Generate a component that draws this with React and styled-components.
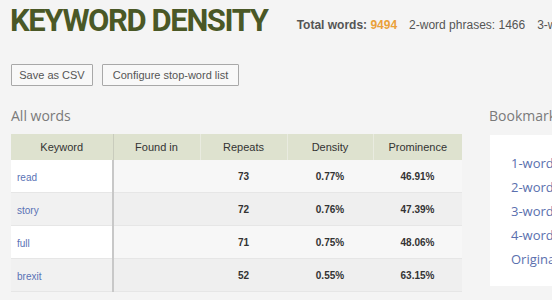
import React from "react";
import styled, { createGlobalStyle } from "styled-components";

const GlobalStyle = createGlobalStyle`
  html, body {
    margin: 0;
    padding: 0;
    background: #f4f4f4;
    font-family: "Liberation Sans", Arial, sans-serif;
    overflow: hidden;
  }
`;

const Page = styled.div`
  width: 552px;
  height: 300px;
  padding: 3px 0 0 11px;
  box-sizing: border-box;
  overflow: hidden;
`;

const Header = styled.div`
  display: flex;
  align-items: flex-start;
  white-space: nowrap;
`;

const Title = styled.h1`
  margin: 0 0 0 -1px;
  font-family: Roboto, "Liberation Sans", sans-serif;
  font-weight: 700;
  font-size: 31px;
  line-height: 36px;
  letter-spacing: -1.4px;
  color: #4a5826;
`;

const Stats = styled.div`
  display: flex;
  gap: 12px;
  margin: 15px 0 0 29px;
  font-size: 12px;
  line-height: 14px;
  color: #555;
`;

const StatLabel = styled.b`
  font-weight: 700;
  color: #555;
`;

const Number = styled.span`
  font-weight: ${(p) => (p.$hot ? 700 : 400)};
  color: ${(p) => (p.$hot ? "#eaa13a" : "#555")};
`;

const Toolbar = styled.div`
  display: flex;
  gap: 9px;
  margin-top: 25px;
`;

const Button = styled.button`
  width: ${(p) => p.$width}px;
  height: 22px;
  padding: 0;
  background: #f8f8f8;
  border: 1px solid #a8a8a8;
  border-radius: 1px;
  font-family: "Liberation Sans", Arial, sans-serif;
  font-size: 11px;
  color: #555;
`;

const Main = styled.div`
  display: flex;
  gap: 27px;
  margin-top: 21px;
`;

const Column = styled.div`
  display: flex;
  flex-direction: column;
  flex: none;
  width: ${(p) => p.$width}px;
`;

const SectionTitle = styled.div`
  font-family: "Open Sans", sans-serif;
  font-size: 14px;
  line-height: 18px;
  color: #7a7a7a;
  white-space: nowrap;
`;

const Table = styled.table`
  margin-top: 9px;
  border-collapse: collapse;
  width: 451px;
  table-layout: fixed;
`;

const Th = styled.th`
  height: 26px;
  padding: 0;
  background: #dee2cf;
  font-weight: 400;
  font-size: 11px;
  color: #333;
  border-left: 1px solid ${(p) => (p.$strong ? "#c9ccbd" : "#e9ebe0")};
  &:first-child {
    border-left: none;
  }
`;

const Tr = styled.tr`
  background: ${(p) => (p.$odd ? "#efefef" : "#f7f7f7")};
  border-bottom: 1px solid #e6e6e6;
`;

const Td = styled.td`
  height: 32px;
  padding: 0;
  text-align: center;
  color: #333;
  font-weight: 700;
  font-size: 10px;
`;

const KeywordCell = styled.td`
  padding: 0 0 0 6px;
  background: ${(p) => (p.$odd ? "#f1f1f1" : "#ffffff")};
  border-right: 2px solid #c8c8c8;
`;

const Link = styled.a`
  color: #5a72b5;
  text-decoration: none;
  font-size: 10px;
`;

const Bookmarks = styled.div`
  margin: 10px 0 0 1px;
  background: #ffffff;
  height: 151px;
  padding: 19px 0 0 21px;
  box-sizing: border-box;
  display: flex;
  flex-direction: column;
  gap: 6px;
  white-space: nowrap;
`;

const BookmarkLink = styled.a`
  font-family: "Open Sans", sans-serif;
  color: #5a6fae;
  font-size: 13px;
  line-height: 18px;
  text-decoration: none;
`;

const rows = [
  { word: "read", repeats: 73, density: "0.77%", prominence: "46.91%" },
  { word: "story", repeats: 72, density: "0.76%", prominence: "47.39%" },
  { word: "full", repeats: 71, density: "0.75%", prominence: "48.06%" },
  { word: "brexit", repeats: 52, density: "0.55%", prominence: "63.15%" },
];

export default function App() {
  return (
    <Page>
      <GlobalStyle />
      <Header>
        <Title>KEYWORD DENSITY</Title>
        <Stats>
          <span>
            <StatLabel>Total words: </StatLabel>
            <Number $hot>9494</Number>
          </span>
          <span>
            2-word phrases: <Number>1466</Number>
          </span>
          <span>
            3-word phrases: <Number>1458</Number>
          </span>
        </Stats>
      </Header>
      <Toolbar>
        <Button $width={82}>Save as CSV</Button>
        <Button $width={137}>Configure stop-word list</Button>
      </Toolbar>
      <Main>
        <Column $width={451}>
          <SectionTitle>All words</SectionTitle>
          <Table>
            <colgroup>
              <col style={{ width: 102 }} />
              <col style={{ width: 87 }} />
              <col style={{ width: 87 }} />
              <col style={{ width: 86 }} />
              <col style={{ width: 89 }} />
            </colgroup>
            <thead>
              <tr>
                <Th>Keyword</Th>
                <Th $strong>Found in</Th>
                <Th>Repeats</Th>
                <Th>Density</Th>
                <Th>Prominence</Th>
              </tr>
            </thead>
            <tbody>
              {rows.map((r, i) => (
                <Tr key={r.word} $odd={i % 2 === 1}>
                  <KeywordCell $odd={i % 2 === 1}>
                    <Link href="#">{r.word}</Link>
                  </KeywordCell>
                  <Td />
                  <Td>{r.repeats}</Td>
                  <Td>{r.density}</Td>
                  <Td>{r.prominence}</Td>
                </Tr>
              ))}
            </tbody>
          </Table>
        </Column>
        <Column $width={120}>
          <SectionTitle>Bookmarks</SectionTitle>
          <Bookmarks>
            <BookmarkLink href="#">1-word phrases</BookmarkLink>
            <BookmarkLink href="#">2-word phrases</BookmarkLink>
            <BookmarkLink href="#">3-word phrases</BookmarkLink>
            <BookmarkLink href="#">4-word phrases</BookmarkLink>
            <BookmarkLink href="#">Original text</BookmarkLink>
          </Bookmarks>
        </Column>
      </Main>
    </Page>
  );
}
